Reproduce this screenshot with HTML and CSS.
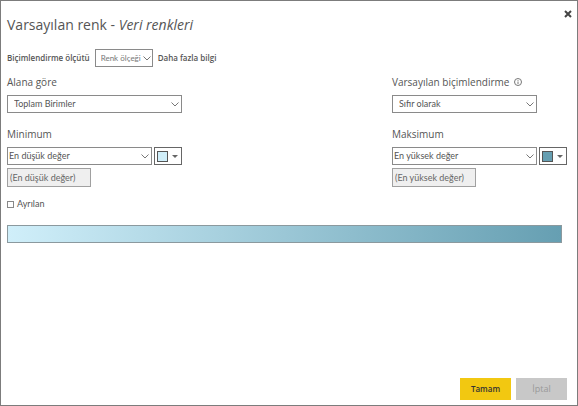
FILE: index.html
```html
<!DOCTYPE html>
<html lang="tr">
<head>
<meta charset="utf-8">
<title>Varsayılan renk - Veri renkleri</title>
<link rel="stylesheet" href="styles.css">
</head>
<body>
<main class="dialog">
  <header class="dialog-header">
    <h1>Varsayılan renk - <em>Veri renkleri</em></h1>
    <button class="close" type="button" aria-label="Kapat">
      <svg viewBox="0 0 8 8"><path d="M1 1l6 6M7 1L1 7"/></svg>
    </button>
  </header>

  <div class="format-row">
    <label for="format">Biçimlendirme ölçütü</label>
    <span class="select select-format">
      <select id="format"><option>Renk ölçeği</option></select>
      <svg viewBox="0 0 8 5"><path d="M.5 .5L4 4L7.5 .5"/></svg>
    </span>
    <a href="#">Daha fazla bilgi</a>
  </div>

  <div class="columns">
    <section class="column">
      <label class="field-label" for="field">Alana göre</label>
      <span class="select select-indent">
        <select id="field"><option>Toplam Birimler</option></select>
        <svg viewBox="0 0 8 5"><path d="M.5 .5L4 4L7.5 .5"/></svg>
      </span>
      <label class="field-label" for="min">Minimum</label>
      <div class="value-row">
        <span class="select">
          <select id="min"><option>En düşük değer</option></select>
          <svg viewBox="0 0 8 5"><path d="M.5 .5L4 4L7.5 .5"/></svg>
        </span>
        <button class="color" type="button" aria-label="Minimum rengi"><span class="swatch swatch-min"></span><span class="caret"></span></button>
      </div>
      <input class="value" type="text" placeholder="(En düşük değer)" aria-label="Minimum değeri" disabled>
    </section>

    <section class="column">
      <label class="field-label" for="default">Varsayılan biçimlendirme
        <svg class="info" viewBox="0 0 8 8"><circle cx="4" cy="4" r="3.5"/><path d="M4 3.5V6M4 2v.8"/></svg>
      </label>
      <span class="select select-indent select-short">
        <select id="default"><option>Sıfır olarak</option></select>
        <svg viewBox="0 0 8 5"><path d="M.5 .5L4 4L7.5 .5"/></svg>
      </span>
      <label class="field-label" for="max">Maksimum</label>
      <div class="value-row">
        <span class="select">
          <select id="max"><option>En yüksek değer</option></select>
          <svg viewBox="0 0 8 5"><path d="M.5 .5L4 4L7.5 .5"/></svg>
        </span>
        <button class="color" type="button" aria-label="Maksimum rengi"><span class="swatch swatch-max"></span><span class="caret"></span></button>
      </div>
      <input class="value" type="text" placeholder="(En yüksek değer)" aria-label="Maksimum değeri" disabled>
    </section>
  </div>

  <label class="diverging"><input type="checkbox">Ayrılan</label>
  <div class="gradient"></div>

  <footer class="actions">
    <button class="ok" type="button">Tamam</button>
    <button class="cancel" type="button">İptal</button>
  </footer>
</main>
</body>
</html>
```
FILE: styles.css
```css
* {
  box-sizing: border-box;
}

body {
  margin: 0;
  background: #fff;
  color: #555;
  font: 8px/12px "Open Sans", "Noto Sans", sans-serif;
}

button,
input,
select {
  margin: 0;
  font: inherit;
  color: inherit;
}

svg {
  display: block;
  fill: none;
  stroke: #777;
}

.dialog {
  display: flex;
  flex-direction: column;
  min-height: 100vh;
  padding: 9px 10px 5px 6px;
  border: 1px solid #7c7c7c;
}

.dialog-header {
  display: flex;
  justify-content: space-between;
  align-items: flex-start;
  height: 39px;
}

h1 {
  margin: 5px 0 0;
  font-size: 14px;
  line-height: 20px;
  font-weight: 400;
}

.close {
  width: 8px;
  height: 8px;
  margin-right: -5px;
  padding: 0;
  border: 0;
  background: none;
}

.close svg {
  width: 8px;
  height: 8px;
  stroke: #444;
  stroke-width: 2;
}

.format-row {
  display: flex;
  align-items: center;
  gap: 5px;
  font-weight: 600;
}

.format-row a {
  color: inherit;
  text-decoration: none;
}

.select {
  position: relative;
  display: block;
  flex: 1;
}

.select select,
.value,
.diverging {
  font-family: Lato, "Open Sans", sans-serif;
  font-size: 9px;
}

.select select {
  display: block;
  width: 100%;
  height: 18px;
  padding: 0 14px 0 1px;
  border: 1px solid #8a8a8a;
  border-radius: 0;
  background: #fff;
  appearance: none;
}

.select svg {
  position: absolute;
  top: 7px;
  right: 3px;
  width: 8px;
  height: 5px;
  pointer-events: none;
}

.select.select-indent select {
  padding-left: 6px;
}

.select-short {
  margin-right: 30px;
}

.select-format {
  flex: 0 0 58px;
  font-weight: 400;
  color: #777;
}

.select.select-format select {
  padding: 0 0 0 5px;
  font-size: 8px;
}

.select.select-format svg {
  right: 2px;
}

.columns {
  display: flex;
  justify-content: space-between;
  margin-top: 8px;
}

.column {
  width: 175px;
}

.field-label {
  display: flex;
  align-items: center;
  gap: 5px;
  height: 14px;
  margin-bottom: 6px;
  font-size: 10px;
  line-height: 14px;
}

.select + .field-label {
  margin-top: 14px;
}

.info {
  width: 8px;
  height: 8px;
  stroke-width: 1;
}

.value-row {
  display: flex;
  gap: 2px;
}

.color {
  display: flex;
  align-items: center;
  gap: 4px;
  width: 28px;
  height: 18px;
  padding: 0 2px;
  border: 1px solid #666;
  background: #fff;
}

.swatch {
  flex: none;
  width: 11px;
  height: 11px;
  border: 1px solid #555;
}

.swatch-min {
  background: #d0effa;
}

.swatch-max {
  background: #669fb2;
}

.caret {
  border: 3px solid transparent;
  border-top-color: #666;
  border-bottom: 0;
}

.value {
  display: block;
  width: 84px;
  height: 19px;
  margin-top: 3px;
  padding: 0 2px;
  border: 1px solid #a0a0a0;
  background: #efefef;
}

.value::placeholder {
  color: #666;
}

.diverging {
  display: flex;
  align-items: center;
  align-self: flex-start;
  gap: 3px;
  margin-top: 11px;
}

.diverging input {
  width: 7px;
  height: 7px;
  border: 1px solid #888;
  background: #fff;
  appearance: none;
}

.diverging input:checked {
  background: #555;
}

.gradient {
  height: 18px;
  margin: 15px 5px 0 0;
  border: 1px solid #8b999e;
  background: linear-gradient(to right, #d0effa, #669fb2);
}

.actions {
  display: flex;
  justify-content: flex-end;
  gap: 5px;
  margin-top: auto;
}

.actions button {
  width: 51px;
  height: 22px;
  padding: 0;
  border: 0;
  font-size: 8px;
}

.actions .ok {
  background: #f2c811;
  color: #333;
  font-weight: 600;
}

.actions .cancel {
  background: #c8c8c8;
  color: #999;
  font-size: 9px;
}
```
